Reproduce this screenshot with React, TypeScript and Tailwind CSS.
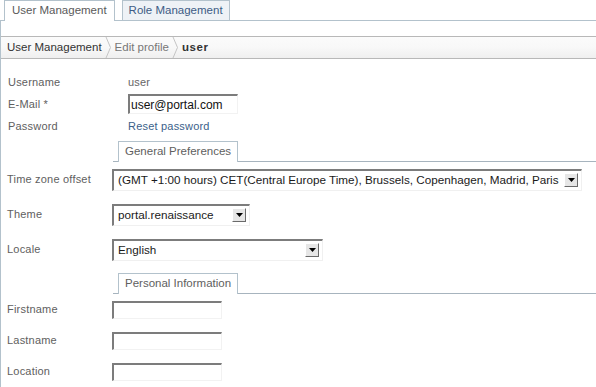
import React from "react";

const font = { fontFamily: '"Liberation Sans", Arial, sans-serif' };

function Chevron() {
  return (
    <svg width="7" height="21" viewBox="0 0 7 21" className="shrink-0 mx-[3px]">
      <polyline points="1,0 5.5,10.5 1,21" fill="none" stroke="#c4c4c4" strokeWidth="1" />
    </svg>
  );
}

function ArrowButton() {
  return (
    <div className="w-[14px] h-[14px] flex items-center justify-center bg-[#e6e6e6] border-t border-l border-white border-b border-r border-b-[#6a6a6a] border-r-[#6a6a6a] shrink-0">
      <svg width="7" height="4" viewBox="0 0 7 4">
        <polygon points="0,0 7,0 3.5,4" fill="#000" />
      </svg>
    </div>
  );
}

function FakeSelect({ value, width }: { value: string; width: string }) {
  return (
    <div
      className={`${width} shrink-0 h-[22px] flex items-center justify-between gap-[2px] bg-white border-t-2 border-l-2 border-[#7c7c7c] border-b border-r border-b-[#f0f0f0] border-r-[#f0f0f0] pl-[4px] pr-[3px] text-[11.7px] tracking-normal text-[#1a1a1a]`}
    >
      <span className="whitespace-nowrap">{value}</span>
      <ArrowButton />
    </div>
  );
}

function TextInput({ value, className }: { value?: string; className: string }) {
  return (
    <input
      defaultValue={value}
      className={`${className} bg-white outline-none border-t-2 border-l-2 border-[#7c7c7c] border-b border-r border-b-[#f2f2f2] border-r-[#f2f2f2] px-[1px] text-[12px] tracking-normal text-[#111]`}
      style={font}
    />
  );
}

function SectionTab({ title }: { title: string }) {
  return (
    <div className="ml-[112px] h-[21px] flex items-end border-b border-[#a7b4be]">
      <div className="ml-[5px] h-[21px] -mb-px bg-white border border-b-0 border-[#b3c2cc] px-[6px] flex items-center text-[11.5px] tracking-normal text-[#606060]">
        {title}
      </div>
    </div>
  );
}

export default function App() {
  return (
    <div className="w-[596px] h-[387px] overflow-hidden bg-white text-[11px] tracking-[0.2px] text-[#606060]" style={font}>
      {/* top tabs */}
      <div className="h-[21px] flex items-end pl-[4px] gap-[7px] border-b border-[#b3c2cc] tracking-normal">
        <div className="h-[21px] -mb-px bg-white border border-b-0 border-[#b3c2cc] px-[7px] flex items-center text-[11.5px] text-[#5a5a5a]">
          User Management
        </div>
        <div className="h-[20px] bg-[#eef2f6] border border-b-0 border-[#b3c2cc] px-[6px] flex items-center text-[11.5px] text-[#3d5c85]">
          Role Management
        </div>
      </div>

      <div className="border-l border-[#b3c2cc] h-full pt-[15px]">
        {/* breadcrumb */}
        <div className="h-[23px] flex items-center border-y border-[#b8b8b8] bg-gradient-to-b from-[#fbfbfb] via-[#f8f8f8] to-[#efefef] pl-[6px] text-[11.5px] tracking-normal">
          <span className="text-[#333]">User Management</span>
          <Chevron />
          <span className="text-[#777]">Edit profile</span>
          <Chevron />
          <span className="text-[#333] font-bold tracking-[0.6px]">user</span>
        </div>

        {/* account */}
        <div className="mt-[12px] pl-[7px]">
          <div className="h-[22px] flex items-center">
            <span className="w-[120px]">Username</span>
            <span className="text-[#666]">user</span>
          </div>
          <div className="h-[22px] flex items-center">
            <span className="w-[120px]">E-Mail *</span>
            <TextInput value="user@portal.com" className="w-[110px] h-[20px]" />
          </div>
          <div className="h-[22px] flex items-center">
            <span className="w-[120px]">Password</span>
            <a href="#" className="text-[#3b5f8a]">Reset password</a>
          </div>
        </div>

        {/* general preferences */}
        <div className="mt-[4px]">
          <SectionTab title="General Preferences" />
          <div className="pl-[6px]">
            <div className="h-[35px] flex items-center">
              <span className="w-[105px] shrink-0">Time zone offset</span>
              <FakeSelect
                width="w-[470px]"
                value="(GMT +1:00 hours) CET(Central Europe Time), Brussels, Copenhagen, Madrid, Paris"
              />
            </div>
            <div className="h-[35px] flex items-center">
              <span className="w-[105px] shrink-0">Theme</span>
              <FakeSelect width="w-[138px]" value="portal.renaissance" />
            </div>
            <div className="h-[35px] flex items-center">
              <span className="w-[105px] shrink-0">Locale</span>
              <FakeSelect width="w-[211px]" value="English" />
            </div>
          </div>
        </div>

        {/* personal information */}
        <div className="mt-[6px]">
          <SectionTab title="Personal Information" />
          <div className="pl-[6px]">
            <div className="h-[31px] flex items-center">
              <span className="w-[105px] shrink-0">Firstname</span>
              <TextInput className="w-[110px] h-[18px]" />
            </div>
            <div className="h-[31px] flex items-center">
              <span className="w-[105px] shrink-0">Lastname</span>
              <TextInput className="w-[110px] h-[18px]" />
            </div>
            <div className="h-[31px] flex items-center">
              <span className="w-[105px] shrink-0">Location</span>
              <TextInput className="w-[110px] h-[18px]" />
            </div>
          </div>
        </div>
      </div>
    </div>
  );
}
